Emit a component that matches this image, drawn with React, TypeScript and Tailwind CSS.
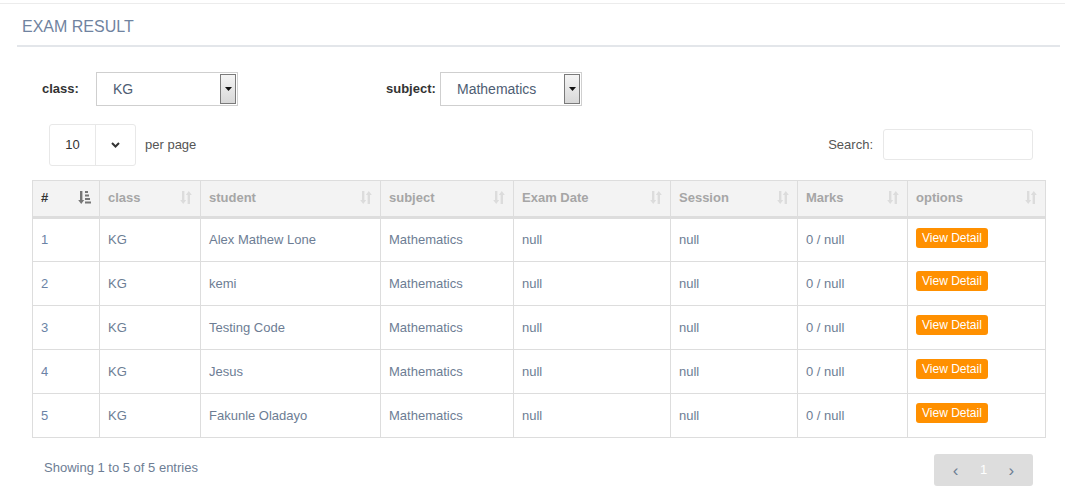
const rows = [
  { id: 1, student: 'Alex Mathew Lone' },
  { id: 2, student: 'kemi' },
  { id: 3, student: 'Testing Code' },
  { id: 4, student: 'Jesus' },
  { id: 5, student: 'Fakunle Oladayo' },
]

const columns = [
  { label: '#', width: 'w-[67px]' },
  { label: 'class', width: 'w-[101px]' },
  { label: 'student', width: 'w-[180px]' },
  { label: 'subject', width: 'w-[133px]' },
  { label: 'Exam Date', width: 'w-[157px]' },
  { label: 'Session', width: 'w-[127px]' },
  { label: 'Marks', width: 'w-[110px]' },
  { label: 'options', width: 'w-[138px]' },
]

function SortIcon() {
  return (
    <svg width="12" height="13" viewBox="0 0 12 13" className="text-[#dcdcdc]" fill="currentColor">
      <path d="M2 0h2.4v9H6.2L3.2 13 0.2 9H2z" />
      <path d="M7.6 13h2.4V4h1.8L8.8 0 5.8 4h1.8z" />
    </svg>
  )
}

function SortAscIcon() {
  return (
    <svg width="13" height="13" viewBox="0 0 13 13" className="text-[#777]" fill="currentColor">
      <path d="M2 0h2.4v9H6.2L3.2 13 0.2 9H2z" />
      <rect x="7" y="0" width="3" height="2" />
      <rect x="7" y="3.5" width="4" height="2" />
      <rect x="7" y="7" width="5" height="2" />
      <rect x="7" y="10.5" width="6" height="2" />
    </svg>
  )
}

function Select({ value, width }: { value: string; width: string }) {
  return (
    <div className={`flex h-[34px] ${width} border border-[#cfcfcf] bg-white`}>
      <div className="flex flex-1 items-center pl-4 text-[14px] text-[#4e5d73]">{value}</div>
      <div className="m-px flex w-[16px] items-center justify-center border border-[#7a7a7a] bg-gradient-to-b from-[#f4f4f4] to-[#d8d8d8]">
        <svg width="7" height="4" viewBox="0 0 7 4">
          <path d="M0 0h7L3.5 4z" fill="#111" />
        </svg>
      </div>
    </div>
  )
}

export default function App() {
  return (
    <div className="min-h-screen bg-white font-['Liberation_Sans',Arial,sans-serif] text-[13px]">
      <div className="pt-[3px]">
        <div className="border-t border-[#ececec]" />
      </div>

      <div className="pl-[17px] pr-[5px]">
        <div className="border-b-2 border-[#e3e6ea] pl-[5px] pt-[13px] pb-[9px]">
          <h2 className="text-[16px] leading-[19px] text-[#7083a0]">EXAM RESULT</h2>
        </div>
      </div>

      <div className="mt-[25px] flex items-start pl-[42px]">
        <label className="mt-[7px] w-[54px] font-bold text-[#333]">class:</label>
        <Select value="KG" width="w-[142px]" />
        <label className="ml-[148px] mt-[7px] w-[54px] font-bold text-[#333]">subject:</label>
        <Select value="Mathematics" width="w-[142px]" />
      </div>

      <div className="mt-[18px] flex items-center justify-between pl-[49px] pr-[32px]">
        <div className="flex items-center">
          <div className="flex h-[42px] w-[87px] rounded-[3px] border border-[#e8e8e8]">
            <div className="flex w-[46px] items-center justify-center border-r border-[#e8e8e8] text-[13px] text-[#333]">10</div>
            <div className="flex flex-1 items-center justify-center">
              <svg width="9" height="6" viewBox="0 0 9 6">
                <path d="M1 1l3.5 3.5L8 1" stroke="#333" strokeWidth="2" fill="none" />
              </svg>
            </div>
          </div>
          <span className="ml-[9px] text-[#555]">per page</span>
        </div>
        <div className="flex items-center">
          <span className="mr-[10px] text-[#555]">Search:</span>
          <input className="mb-[2px] h-[31px] w-[150px] rounded-[3px] border border-[#e8e8e8] outline-none" />
        </div>
      </div>

      <div className="mt-[14px] pl-[32px] pr-[20px]">
        <table className="w-[1013px] table-fixed border-collapse border border-[#dddddd]">
          <thead>
            <tr className="h-[37px] border-b-[3px] border-[#dddddd] bg-[#f3f3f3]">
              {columns.map((c, i) => (
                <th key={c.label} className={`${c.width} border border-[#dddddd] px-[8px] pb-[2px] text-left font-bold`}>
                  <div className="flex items-center justify-between">
                    <span className={i === 0 ? 'text-[#333]' : 'text-[#a6a6a6]'}>{c.label}</span>
                    {i === 0 ? <SortAscIcon /> : <SortIcon />}
                  </div>
                </th>
              ))}
            </tr>
          </thead>
          <tbody>
            {rows.map((r) => (
              <tr key={r.id} className="h-[44px] text-[#6d7d94]">
                <td className="border border-[#dddddd] px-[8px] text-[#6b83a6]">{r.id}</td>
                <td className="border border-[#dddddd] px-[8px]">KG</td>
                <td className="border border-[#dddddd] px-[8px]">{r.student}</td>
                <td className="border border-[#dddddd] px-[8px]">Mathematics</td>
                <td className="border border-[#dddddd] px-[8px]">null</td>
                <td className="border border-[#dddddd] px-[8px]">null</td>
                <td className="border border-[#dddddd] px-[8px]">0 / null</td>
                <td className="border border-[#dddddd] px-[8px] align-top pt-[9px]">
                  <button className="h-[20px] rounded-[3px] bg-[#ff9000] px-[6px] text-[12px] leading-[20px] text-white">
                    View Detail
                  </button>
                </td>
              </tr>
            ))}
          </tbody>
        </table>
      </div>

      <div className="mt-[16px] flex items-start justify-between pl-[44px] pr-[32px]">
        <span className="mt-[6px] text-[13px] leading-[15px] text-[#6d7d94]">Showing 1 to 5 of 5 entries</span>
        <div className="flex h-[32px] w-[99px] items-center justify-around rounded-[3px] bg-[#dddddd] px-[8px] text-[13px]">
          <span className="text-[17px] leading-none text-[#6d7d94]">‹</span>
          <span className="text-white">1</span>
          <span className="text-[17px] leading-none text-[#6d7d94]">›</span>
        </div>
      </div>
    </div>
  )
}
